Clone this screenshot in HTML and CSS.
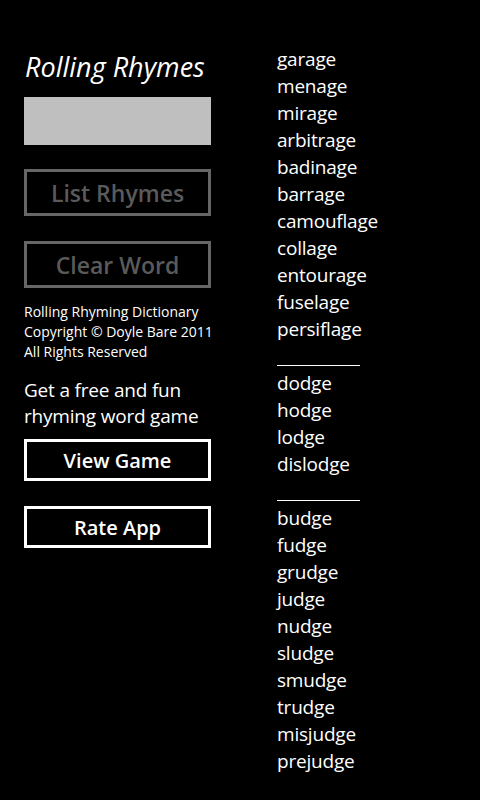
FILE: index.html
```html
<!DOCTYPE html>
<html lang="en">
<head>
    <meta charset="UTF-8" />
    <title>Rolling Rhymes</title>
    <link rel="stylesheet" href="styles.css">
</head>
<body>
    <div id="wrap">
        <section class="side">
            <h1 class="title">Rolling Rhymes</h1>
            <div class="word-box"></div>
            <a href="javascript:;" class="btn btn-off">List Rhymes</a>
            <a href="javascript:;" class="btn btn-off">Clear Word</a>
            <p class="about">Rolling Rhyming Dictionary<br>Copyright &copy; Doyle Bare 2011<br>All Rights Reserved</p>
            <p class="promo">Get a free and fun<br>rhyming word game</p>
            <a href="javascript:;" class="btn btn-on">View Game</a>
            <a href="javascript:;" class="btn btn-on">Rate App</a>
        </section>
        <ul class="rhymes">
            <li>garage</li>
            <li>menage</li>
            <li>mirage</li>
            <li>arbitrage</li>
            <li>badinage</li>
            <li>barrage</li>
            <li>camouflage</li>
            <li>collage</li>
            <li>entourage</li>
            <li>fuselage</li>
            <li>persiflage</li>
            <li class="sep"><span></span></li>
            <li>dodge</li>
            <li>hodge</li>
            <li>lodge</li>
            <li>dislodge</li>
            <li class="sep"><span></span></li>
            <li>budge</li>
            <li>fudge</li>
            <li>grudge</li>
            <li>judge</li>
            <li>nudge</li>
            <li>sludge</li>
            <li>smudge</li>
            <li>trudge</li>
            <li>misjudge</li>
            <li>prejudge</li>
        </ul>
    </div>
</body>
</html>
```

FILE: styles.css
```css
html, body{
    margin: 0;
    padding: 0;
    background: #000;
    color: #fff;
    font-family: "Open Sans", "Noto Sans", sans-serif;
}
#wrap{
    width: 480px;
    height: 800px;
    display: grid;
    grid-template-columns: 187px 1fr;
    column-gap: 66px;
    padding: 46px 0 0 24px;
    box-sizing: border-box;
    overflow: hidden;
}
.side{
    display: flex;
    flex-direction: column;
    padding-top: 3px;
}
.title{
    margin: 0 0 12px;
    padding-left: 1px;
    font-size: 27px;
    line-height: 36px;
    font-weight: 400;
    font-style: italic;
    white-space: nowrap;
}
.word-box{
    height: 48px;
    background: #bfbfbf;
}
a{
    text-decoration: none;
}
.btn{
    display: flex;
    align-items: center;
    justify-content: center;
    box-sizing: border-box;
    border: 3px solid;
}
.btn-off{
    height: 47px;
    margin-top: 24px;
    color: #5a5a5a;
    border-color: #666;
    font-size: 23px;
    font-weight: 600;
}
.btn-off + .btn-off{
    margin-top: 25px;
}
.btn-on{
    height: 42px;
    margin-top: 25px;
    color: #fff;
    border-color: #fff;
    font-size: 20px;
    font-weight: 600;
}
.promo + .btn-on{
    margin-top: 10px;
}
.about{
    margin: 14px 0 0;
    font-size: 14px;
    line-height: 20px;
    white-space: nowrap;
}
.promo{
    margin: 15px 0 0;
    font-size: 19px;
    line-height: 26px;
    letter-spacing: -0.2px;
}
.rhymes{
    margin: 0;
    padding: 0;
    list-style: none;
}
.rhymes li{
    height: 27px;
    line-height: 27px;
    font-size: 19px;
    letter-spacing: -0.2px;
}
.rhymes .sep{
    position: relative;
}
.sep span{
    position: absolute;
    left: 0;
    top: 22px;
    width: 83px;
    border-top: 1px solid #fff;
}
```
